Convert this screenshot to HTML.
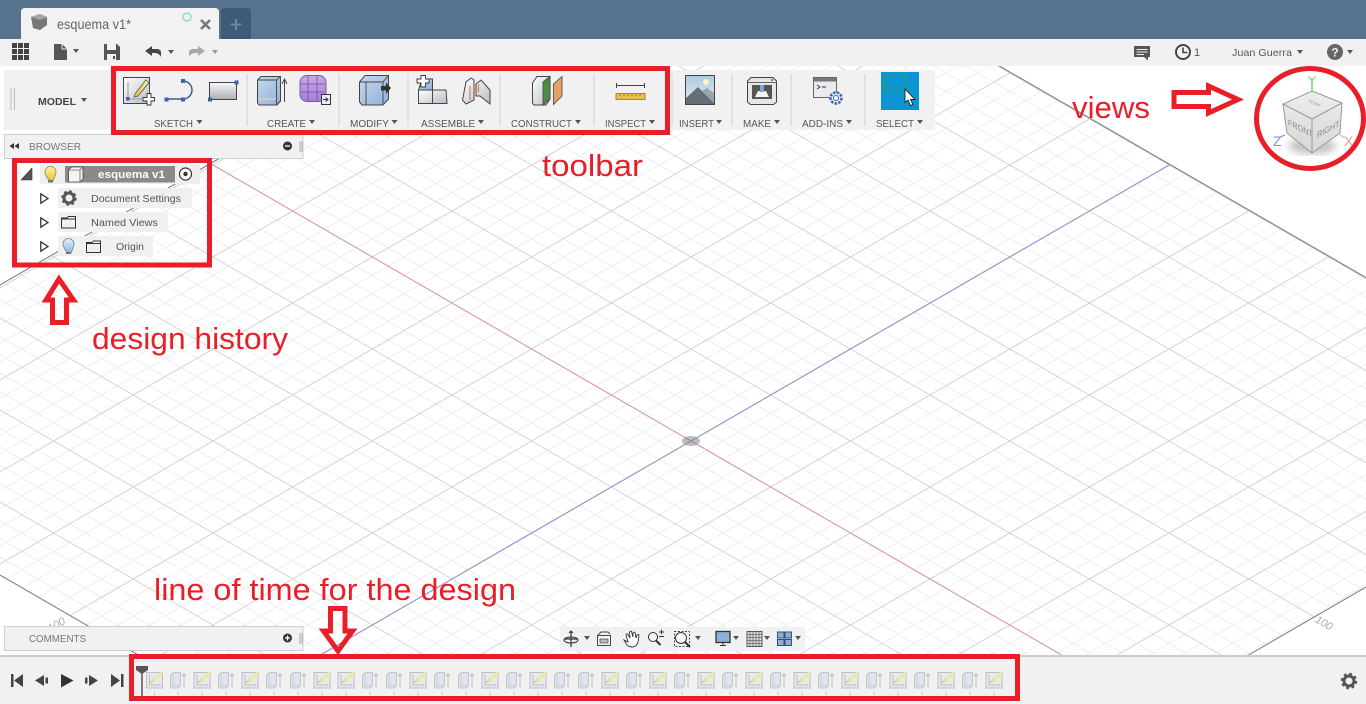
<!DOCTYPE html>
<html><head><meta charset="utf-8"><title>esquema v1</title>
<style>html,body{margin:0;padding:0;background:#fff;overflow:hidden;width:1366px;height:704px}svg{display:block;font-family:"Liberation Sans",sans-serif}</style></head>
<body>
<svg width="1366" height="704" viewBox="0 0 1366 704" xmlns="http://www.w3.org/2000/svg">
<defs>
<pattern id="grid" patternUnits="userSpaceOnUse" width="92" height="92" patternTransform="matrix(.866 .5 .866 -.5 691 441)">
<g stroke="#eeeeee" stroke-width="1.1" fill="none">
<path d="M18.4 0V92M36.8 0V92M55.2 0V92M73.6 0V92M0 18.4H92M0 36.8H92M0 55.2H92M0 73.6H92"/></g>
<g stroke="#d0d0d0" stroke-width="1.1" fill="none"><path d="M0 0V92M92 0V92M0 0H92M0 92H92"/></g>
</pattern>
<linearGradient id="gw" x1="0" y1="0" x2="0" y2="1"><stop offset="0" stop-color="#fafafa"/><stop offset="1" stop-color="#a9aeb6"/></linearGradient>
<linearGradient id="gs" x1="0" y1="0" x2="1" y2="1"><stop offset="0" stop-color="#fff"/><stop offset="1" stop-color="#b9bec6"/></linearGradient>
<linearGradient id="gb" x1="0" y1="0" x2="1" y2="1"><stop offset="0" stop-color="#c6d9ee"/><stop offset="1" stop-color="#8fb0d6"/></linearGradient>
<linearGradient id="gp" x1="0" y1="0" x2="0" y2="1"><stop offset="0" stop-color="#c9a8e8"/><stop offset="1" stop-color="#a47fd4"/></linearGradient>
<linearGradient id="gy" x1="0" y1="0" x2="0" y2="1"><stop offset="0" stop-color="#fdf5a0"/><stop offset="1" stop-color="#e2c433"/></linearGradient>
<linearGradient id="gbu" x1="0" y1="0" x2="0" y2="1"><stop offset="0" stop-color="#e4eefa"/><stop offset="1" stop-color="#8fb4de"/></linearGradient>
<linearGradient id="gsky" x1="0" y1="0" x2="0" y2="1"><stop offset="0" stop-color="#a9cbe0"/><stop offset="1" stop-color="#e6eef2"/></linearGradient>
<linearGradient id="gc" x1="0" y1="0" x2="0" y2="1"><stop offset="0" stop-color="#eeeeee"/><stop offset="1" stop-color="#d6d6d6"/></linearGradient>
<filter id="bl"><feGaussianBlur stdDeviation="4"/></filter>
<g id="S">
<rect x="-8" y="0" width="16" height="15.5" fill="#e6e9ee" stroke="#bdbdbd"/>
<path d="M-5 2V12.5H6" fill="none" stroke="#bcbcbc"/>
<path d="M-3 10L8 0" stroke="#efe7a0" stroke-width="3"/>
<path d="M-4.5 11L-1 7" stroke="#d8c8a8" stroke-width="1"/>
<path d="M0 19V23" stroke="#c8c8c8"/>
</g>
<g id="E">
<path d="M-7.5 3L-5 0H2.5V13L0 15.5H-7.5Z" fill="#dde4ee" stroke="#c4c4c4"/>
<path d="M-5 0V13H-7.5M-5 13H2.5" fill="none" stroke="#d0d0d0"/>
<path d="M6 15V2M4 4L6 1L8 4" fill="none" stroke="#c4c4c4"/>
<path d="M0 19V23" stroke="#c8c8c8"/>
</g>
<path id="car" d="M-3 -2H3L0 2Z" fill="#555"/>
<path id="tr" d="M0.8 0.8L8 5.5L0.8 10.2Z" fill="#fff" stroke="#333" stroke-width="1.3"/>
<path id="fold" d="M0.5 2.5H6L7.5 1H14.5V12.5H0.5Z M0.5 3.5H14.5" fill="none" stroke="#333"/>
</defs>

<rect width="1366" height="704" fill="#fff"/>
<!-- grid -->
<polygon points="494,0 885,0 1366,277.6 1366,587 1164,704 223,704 0,575 0,285" fill="url(#grid)"/>
<path d="M0 285L494 0M885 0L1366 277.600M1164 704L1366 587M0 575L223 704" fill="none" stroke="#777" stroke-width="1"/>
<line x1="210.400" y1="163.500" x2="1146.500" y2="704" stroke="#dd9a9c" stroke-width="1.100"/>
<line x1="1170" y1="164.500" x2="235.500" y2="704" stroke="#9292cf" stroke-width="1.100"/>
<ellipse cx="691" cy="441" rx="9" ry="5" fill="#bdbdbd"/>
<path d="M685 437.500L697 444.500M685 444.500L697 437.500" stroke="#8a7f9d" stroke-width="1"/>
<text x="1315" y="627" font-size="11" font-style="italic" fill="#aaa" transform="rotate(30 1325 623)">100</text>
<text x="47" y="628" font-size="11" font-style="italic" fill="#aaa" transform="rotate(-30 57 624)">100</text>

<!-- title bar -->
<rect width="1366" height="39" fill="#56728f"/>
<path d="M21 39V12Q21 8 25 8H215Q219 8 219 12V39Z" fill="#f2f2f2"/>
<path d="M221 39V12Q221 8 225 8H247Q251 8 251 12V39Z" fill="#3f5a78"/>
<path d="M31 17L40 14L47 17V25L40 30L33 28Z" fill="#777"/><path d="M31 17L40 20L47 17L40 14Z" fill="#a5a5a5"/>
<text x="57" y="29" font-size="14" fill="#666" textLength="74" lengthAdjust="spacingAndGlyphs">esquema v1*</text>
<circle cx="187" cy="17" r="4" fill="none" stroke="#7fd6c4" stroke-width="1.2"/>
<path d="M201 20L210 29M210 20L201 29" stroke="#777" stroke-width="2.6"/>
<path d="M236 19V30M230.500 24.500H241.500" stroke="#6d87a0" stroke-width="2"/>

<!-- menu row -->
<rect y="39" width="1366" height="27" fill="#f1f1f1"/>
<path d="M12 43h5v5h-5zM18 43h5v5h-5zM24 43h5v5h-5zM12 49h5v5h-5zM18 49h5v5h-5zM24 49h5v5h-5zM12 55h5v5h-5zM18 55h5v5h-5zM24 55h5v5h-5z" fill="#444"/>
<path d="M54 44H62L67 49V60H54Z" fill="#555"/><path d="M62 44V49H67" fill="none" stroke="#f1f1f1"/>
<use href="#car" x="76" y="51"/>
<path d="M104 44H117L120 47V60H104Z" fill="#555"/><rect x="107" y="44" width="9" height="6" fill="#f1f1f1"/><rect x="107" y="54" width="9" height="6" fill="#f1f1f1"/><rect x="113" y="56" width="2" height="3" fill="#555"/>
<path d="M145 51L152 46V49H157Q161 49 161 53V57Q159 53 155 53H152V56Z" fill="#444"/>
<use href="#car" x="171" y="52"/>
<path d="M205 51L198 46V49H193Q189 49 189 53V57Q191 53 195 53H198V56Z" fill="#a8a8a8"/>
<path d="M212 50H218L215 54Z" fill="#999"/>
<path d="M1134 46H1150V57H1148V60.500L1144 57H1134Z" fill="#555"/><path d="M1136.500 49.500H1147.500M1136.500 52H1147.500M1136.500 54.500H1144" stroke="#f1f1f1"/>
<circle cx="1183" cy="52" r="7" fill="none" stroke="#444" stroke-width="2"/><path d="M1183 47.500V52.500H1187.500" fill="none" stroke="#444" stroke-width="1.6"/>
<text x="1194" y="56" font-size="11" fill="#555">1</text>
<text x="1232" y="56" font-size="10.500" fill="#555" textLength="60" lengthAdjust="spacingAndGlyphs">Juan Guerra</text>
<use href="#car" x="1300" y="52"/>
<circle cx="1335" cy="52" r="8" fill="#666"/><text x="1335" y="56.500" font-size="12" font-weight="bold" fill="#f1f1f1" text-anchor="middle">?</text>
<use href="#car" x="1350" y="52"/>

<!-- toolbar -->
<rect x="4" y="70" width="931" height="60" fill="#f1f1f1"/>
<path d="M11 88V110M14.500 88V110" stroke="#bdbdbd"/>
<text x="38" y="105" font-size="10.500" font-weight="bold" fill="#444" textLength="38" lengthAdjust="spacingAndGlyphs">MODEL</text>
<use href="#car" x="84" y="100"/>
<path d="M247 74V126M339 74V126M408 74V126M500 74V126M594 74V126M672 74V126M732 74V126M791 74V126M865 74V126" stroke="#dcdcdc" stroke-width="1.500"/>
<g font-size="10.500" fill="#555">
<text x="154" y="127" textLength="39" lengthAdjust="spacingAndGlyphs">SKETCH</text>
<text x="267" y="127" textLength="39" lengthAdjust="spacingAndGlyphs">CREATE</text>
<text x="350" y="127" textLength="39" lengthAdjust="spacingAndGlyphs">MODIFY</text>
<text x="421" y="127" textLength="54" lengthAdjust="spacingAndGlyphs">ASSEMBLE</text>
<text x="511" y="127" textLength="61" lengthAdjust="spacingAndGlyphs">CONSTRUCT</text>
<text x="605" y="127" textLength="41" lengthAdjust="spacingAndGlyphs">INSPECT</text>
<text x="679" y="127" textLength="35" lengthAdjust="spacingAndGlyphs">INSERT</text>
<text x="743" y="127" textLength="28" lengthAdjust="spacingAndGlyphs">MAKE</text>
<text x="802" y="127" textLength="41" lengthAdjust="spacingAndGlyphs">ADD-INS</text>
<text x="876" y="127" textLength="38" lengthAdjust="spacingAndGlyphs">SELECT</text>
</g>
<use href="#car" x="199.500" y="122"/><use href="#car" x="312" y="122"/><use href="#car" x="394.500" y="122"/><use href="#car" x="481" y="122"/><use href="#car" x="578" y="122"/><use href="#car" x="652" y="122"/><use href="#car" x="719" y="122"/><use href="#car" x="777" y="122"/><use href="#car" x="849" y="122"/><use href="#car" x="920" y="122"/>

<!-- sketch -->
<rect x="123.500" y="77.500" width="26" height="26" fill="url(#gs)" stroke="#444"/>
<path d="M128 82V99H145" fill="none" stroke="#9a9a9a"/><rect x="126" y="97" width="3.500" height="3.500" fill="#3c62ad"/>
<path d="M135 94L146 80L149 82.500L138 96L134 97Z" fill="url(#gy)" stroke="#555" stroke-width=".8"/>
<path d="M147 93.500H151V97.500H154.500V101H151V105H147V101H143V97.500H147Z" fill="#fff" stroke="#333" stroke-width=".9"/>
<path d="M166 99H183A9 9 0 0 0 183 81" fill="none" stroke="#3c5a9a" stroke-width="1.500"/>
<rect x="164.500" y="97.500" width="4" height="4" fill="#3c62ad"/><rect x="181" y="97.500" width="4" height="4" fill="#3c62ad"/><rect x="181" y="79" width="4" height="4" fill="#3c62ad"/>
<rect x="209.500" y="82.500" width="27" height="17" fill="url(#gw)" stroke="#444"/>
<rect x="234.500" y="80.500" width="4" height="4" fill="#3c62ad"/><rect x="208" y="97.500" width="4" height="4" fill="#3c62ad"/>
<!-- create -->
<path d="M257.500 80L261 76.500H280.500V101L277 105H259L257.500 103Z" fill="url(#gb)" stroke="#444"/>
<path d="M258 80H276.500V105M276.500 80L280.500 76.500" fill="none" stroke="#444" stroke-width=".9"/><path d="M258 99H276" stroke="#ccc" stroke-width="2"/>
<path d="M284.500 102V80M282 84L284.500 79L287 84" fill="none" stroke="#444"/>
<rect x="300" y="75.500" width="26" height="26" rx="7" fill="url(#gp)" stroke="#7a5aa8"/>
<path d="M301 84H325M301 92H325M308 76V101M317 76V101" stroke="#7c5cb0"/>
<rect x="321.500" y="94.500" width="9" height="10" fill="#eee" stroke="#333"/><path d="M323 99.500H327M325.500 97.500L328 99.500L325.500 101.500" fill="none" stroke="#333"/>
<!-- modify -->
<path d="M359.500 82L365 75.500H388.500V99L383 105H362L359.500 102Z" fill="url(#gb)" stroke="#444"/>
<path d="M366 82H383V105M383 82L388.500 75.500M366 82V105M360 82H366" fill="none" stroke="#444" stroke-width=".9"/>
<path d="M381 86H386V82.500L391 88L386 94V90.500H381Z" fill="#333"/>
<!-- assemble -->
<path d="M418.500 90H432.500V103.500H418.500Z M432.500 90H446L447 103.500H432.500Z" fill="url(#gs)" stroke="#444"/>
<path d="M422 79H432.500V90H418.500Z" fill="url(#gb)" stroke="#444"/>
<path d="M421 75.500H425.500V79H429V83H425.500V87H421V83H417V79H421Z" fill="#fff" stroke="#333" stroke-width=".9"/>
<!-- joint -->
<path d="M462.500 100L466 82L471 78L474 80V100L466 104ZM476 84L481 80L490 90V104L480 96L476 96Z" fill="url(#gs)" stroke="#444"/>
<path d="M470 86V100M478.500 84V92" stroke="#e08a3c" stroke-width="1.300"/>
<!-- construct -->
<path d="M532.500 83L537 76.500H550V99L546 105H534L532.500 103Z" fill="url(#gs)" stroke="#444"/>
<path d="M543 82L550 76.500V99L543 105Z" fill="#4f8a45" stroke="#444" stroke-width=".8"/>
<path d="M553.500 84L562 76.500V96L553.500 104.500Z" fill="#e6a06a" stroke="#444" stroke-width=".8"/>
<!-- inspect -->
<path d="M616.500 83V88M644.500 83V88M616.500 85.500H644.500" stroke="#444" fill="none"/>
<rect x="616" y="93.500" width="29" height="6" fill="#e6c04a" stroke="#a58a3a"/><path d="M620 94V96M624 94V96M628 94V96M632 94V96M636 94V96M640 94V96" stroke="#8a6f2a" stroke-width=".8"/>
<!-- insert -->
<rect x="685.500" y="75.500" width="29" height="29" fill="url(#gsky)" stroke="#444"/>
<circle cx="706" cy="82" r="3" fill="#fdf6c0"/>
<path d="M686 98L698 87L714 103V104H686Z" fill="#666d77"/><path d="M702 91L707 88L714 93V103Z" fill="#98a3ae"/>
<!-- make -->
<path d="M747.500 81L751 77.500H773L776.500 81V102L773.500 104.500H750.500L747.500 102Z" fill="#e6e6e6" stroke="#444"/>
<path d="M748 82.500H776" stroke="#666"/><rect x="752" y="85" width="20" height="14" fill="#555"/>
<path d="M755 97L758 91H766L769 97Z" fill="#f3f3f3"/><rect x="760" y="85" width="4" height="7" fill="#7fa8d8"/>
<rect x="771" y="79" width="2" height="2" fill="#2f9e4f"/>
<!-- add-ins -->
<rect x="813.500" y="77.500" width="23" height="20" fill="#e9ebee" stroke="#666"/><rect x="814" y="78" width="22" height="3.500" fill="#777"/>
<path d="M817 85L820 87L817 89M822 87H826" fill="none" stroke="#333" stroke-width=".9"/>
<circle cx="836" cy="98" r="5.500" fill="#e6eef8" stroke="#3d66a8" stroke-width="2.500" stroke-dasharray="2.500 1.300"/><circle cx="836" cy="98" r="2.500" fill="#fff" stroke="#3d66a8"/>
<!-- select -->
<rect x="881" y="72" width="38" height="38" fill="#0a94d6"/>
<rect x="885" y="75.500" width="21" height="14" fill="none" stroke="#2f9f5c" stroke-width="1.500"/>
<path d="M905 89V102.500L908 100L910.500 105.500L913 104.500L910.500 99.500H915Z" fill="#fff" stroke="#222" stroke-width=".9"/>

<!-- browser -->
<rect x="4.500" y="134.500" width="298.500" height="24" fill="#f1f1f1" stroke="#d0d0d0"/>
<path d="M14 143V149L9.500 146ZM19 143V149L14.500 146Z" fill="#333"/>
<text x="29" y="150" font-size="10.500" fill="#777" textLength="52" lengthAdjust="spacingAndGlyphs">BROWSER</text>
<circle cx="287.500" cy="146" r="4.500" fill="#333"/><path d="M285 146H290" stroke="#fff" stroke-width="1.300"/>
<path d="M300 141V152M302 141V152" stroke="#aaa"/>
<!-- tree -->
<rect x="40" y="165" width="160" height="19" fill="#efefef"/>
<rect x="58" y="188" width="134" height="20" fill="#f0f0f0"/>
<rect x="58" y="212" width="110" height="20" fill="#f0f0f0"/>
<rect x="58" y="236" width="95" height="20" fill="#f0f0f0"/>
<path d="M21 180L32 168V180Z" fill="#555" stroke="#333" stroke-width=".6"/>
<path d="M50 181C47 178 45 175 45 172A5.500 5.500 0 0 1 56 172C56 175 54 178 53 181Z" fill="url(#gy)" stroke="#8a8a5a" stroke-width=".8"/><rect x="48" y="180" width="5" height="2.500" fill="#777"/>
<rect x="65" y="166" width="110" height="16.500" fill="#8a8a8a"/>
<path d="M68.500 170L71.500 167H83V179L80 182H68.500Z" fill="#f4f4f4" stroke="#444" stroke-width=".8"/><path d="M69 170H80V182M80 170L83 167" fill="none" stroke="#666" stroke-width=".8"/>
<text x="98" y="178" font-size="11" font-weight="bold" fill="#fff" textLength="67" lengthAdjust="spacingAndGlyphs">esquema v1</text>
<circle cx="185.500" cy="174" r="6" fill="#fff" stroke="#333" stroke-width="1.200"/><circle cx="185.500" cy="174" r="2.200" fill="#333"/>
<use href="#tr" x="40" y="193"/><use href="#tr" x="40" y="217"/><use href="#tr" x="40" y="241"/>
<circle cx="69" cy="198" r="5" fill="none" stroke="#555" stroke-width="3"/>
<circle cx="69" cy="198" r="6.500" fill="none" stroke="#555" stroke-width="2.500" stroke-dasharray="2.500 2.600"/>
<text x="91" y="202" font-size="10.500" fill="#555" textLength="90" lengthAdjust="spacingAndGlyphs">Document Settings</text>
<use href="#fold" x="61" y="215.500"/>
<text x="91" y="226" font-size="10.500" fill="#555" textLength="67" lengthAdjust="spacingAndGlyphs">Named Views</text>
<path d="M68 253C65 250 63 247 63 244A5.500 5.500 0 0 1 74 244C74 247 72 250 71 253Z" fill="url(#gbu)" stroke="#6a84a8" stroke-width=".8"/><rect x="66" y="252" width="5" height="2" fill="#777"/>
<use href="#fold" x="86" y="240"/>
<text x="116" y="250" font-size="10.500" fill="#555" textLength="28" lengthAdjust="spacingAndGlyphs">Origin</text>

<!-- comments -->
<rect x="4.500" y="626.500" width="298.500" height="24" fill="#f1f1f1" stroke="#d0d0d0"/>
<text x="29" y="642" font-size="10.500" fill="#777" textLength="57" lengthAdjust="spacingAndGlyphs">COMMENTS</text>
<circle cx="287.500" cy="638" r="4.500" fill="#333"/><path d="M285 638H290M287.500 635.500V640.500" stroke="#fff" stroke-width="1.300"/>
<path d="M300 633V644M302 633V644" stroke="#aaa"/>

<!-- view toolbar -->
<rect x="560" y="627" width="245" height="24" fill="#f1f1f1"/>
<path d="M571 631V647M564 639H578" stroke="#333" stroke-width="1.200"/><ellipse cx="571" cy="640" rx="7" ry="3" fill="none" stroke="#333"/><path d="M569 633L571 631L573 633" fill="none" stroke="#333"/>
<use href="#car" x="587" y="638"/>
<rect x="597.500" y="635.500" width="13" height="10" fill="#f6f6f6" stroke="#444"/><rect x="600" y="639" width="8" height="4" fill="#bbb" stroke="#444" stroke-width=".7"/><path d="M598 635L601 632H608L610 634" fill="none" stroke="#444"/>
<path d="M624 640L627 645Q629 647 633 647Q637 646 638 642L639 635Q638 634 637 635L636 638L635 632.500Q634 631.500 633 633L633 637L631.500 631.500Q630.500 630.500 629.500 632L630 638L627.500 634Q626.500 633.500 626 635L628 642Z" fill="#fff" stroke="#333" stroke-width=".9"/>
<circle cx="653" cy="637" r="4.500" fill="#f6f6f6" stroke="#333"/><path d="M656 640.500L660.500 645" stroke="#333" stroke-width="2"/><path d="M659 632H664M661.500 629.500V634.500M659 636.500H664" stroke="#333" stroke-width=".9" fill="none"/>
<rect x="674.500" y="631.500" width="15" height="15" fill="none" stroke="#444" stroke-dasharray="2 1.500"/><circle cx="681" cy="638" r="5.500" fill="#f6f6f6" stroke="#333"/><path d="M685 642L690 647" stroke="#333" stroke-width="2"/>
<use href="#car" x="698" y="638"/>
<rect x="716" y="631.500" width="14" height="11" fill="#8fb0d6" stroke="#333" stroke-width="1.300"/><path d="M720 645.500H726M723 643V645.500" stroke="#333"/>
<use href="#car" x="736" y="638"/>
<rect x="747" y="631.500" width="15" height="15" fill="#ddd" stroke="#555"/><path d="M750 632V646M753 632V646M756 632V646M759 632V646M747 634.500H762M747 637.500H762M747 640.500H762M747 643.500H762" stroke="#666" stroke-width=".8"/>
<use href="#car" x="767" y="638"/>
<rect x="777.500" y="632" width="6.500" height="6" fill="#8fb0d6" stroke="#33507a"/><rect x="785" y="632" width="6.500" height="6" fill="#8fb0d6" stroke="#33507a"/><rect x="777.500" y="639.500" width="6.500" height="6" fill="#8fb0d6" stroke="#33507a"/><rect x="785" y="639.500" width="6.500" height="6" fill="#8fb0d6" stroke="#33507a"/>
<use href="#car" x="798" y="638"/>

<!-- timeline -->
<rect y="655" width="1366" height="49" fill="#f1f1f1"/>
<rect y="655" width="1366" height="2" fill="#cdcdcd"/>
<path d="M11 674H13.500V687H11ZM23 674V687L14 680.500Z" fill="#444"/>
<path d="M44 675V686L35 680.500ZM45.500 677.500H48V683.500H45.500Z" fill="#444"/>
<path d="M61 674V687.500L73.500 680.500Z" fill="#333"/>
<path d="M89 675V686L98 680.500ZM85 677.500H87.500V683.500H85Z" fill="#444"/>
<path d="M111 674V687L120 680.500ZM121 674H123.500V687H121Z" fill="#444"/>
<g transform="translate(0 672.500)">
<use href="#S" x="154.500"/><use href="#E" x="178"/><use href="#S" x="202"/><use href="#E" x="226"/><use href="#S" x="250"/><use href="#E" x="274"/><use href="#E" x="298"/><use href="#S" x="322"/><use href="#S" x="346"/><use href="#E" x="370"/><use href="#E" x="394"/><use href="#S" x="418"/><use href="#E" x="442"/><use href="#E" x="466"/><use href="#S" x="490"/><use href="#E" x="514"/><use href="#S" x="538"/><use href="#E" x="562"/><use href="#E" x="586"/><use href="#S" x="610"/><use href="#E" x="634"/><use href="#S" x="658"/><use href="#E" x="682"/><use href="#S" x="706"/><use href="#E" x="730"/><use href="#S" x="754"/><use href="#E" x="778"/><use href="#S" x="802"/><use href="#E" x="826"/><use href="#S" x="850"/><use href="#E" x="874"/><use href="#S" x="898"/><use href="#E" x="922"/><use href="#S" x="946"/><use href="#E" x="970"/><use href="#S" x="994"/>
</g>
<path d="M136 666H148V670L142 674L136 670Z" fill="#555"/><path d="M142 672V697" stroke="#555" stroke-width="1.500"/>
<circle cx="1349" cy="681" r="5" fill="none" stroke="#555" stroke-width="3"/>
<circle cx="1349" cy="681" r="7" fill="none" stroke="#555" stroke-width="2.500" stroke-dasharray="2.700 2.800"/>

<!-- view cube -->
<ellipse cx="1312" cy="146" rx="24" ry="8" fill="#8f8f8f" opacity=".55" filter="url(#bl)"/>
<path d="M1312 91L1342 103L1340 133L1312 153L1287 133L1283 104Z" fill="url(#gc)" stroke="#999"/>
<path d="M1283 104L1312 119L1342 103M1312 119V153" fill="none" stroke="#999"/>
<path d="M1312 78V91" stroke="#90e090" stroke-width="2"/>
<text x="1312" y="86" font-size="15" fill="#90e090" text-anchor="middle">Y</text>
<path d="M1285 135L1280 137" stroke="#8888ee"/><path d="M1338 134L1345 138" stroke="#f0a0a0"/>
<text x="1273" y="146" font-size="14" fill="#8a8aee">Z</text>
<text x="1344" y="146" font-size="14" fill="#f09a9a">X</text>
<text x="0" y="0" font-size="7" fill="#999" transform="matrix(.85 .4 -.7 .35 1306 101)">TOP</text>
<text x="0" y="0" font-size="8.500" fill="#888" transform="matrix(.85 .42 0 1 1288 125)">FRONT</text>
<text x="0" y="0" font-size="8.500" fill="#888" transform="matrix(.85 -.45 0 1 1317 138)">RIGHT</text>

<!-- annotations -->
<g fill="none" stroke="#e81f28" stroke-width="5">
<rect x="113.500" y="68.500" width="554" height="64"/>
<rect x="14.500" y="160.500" width="195" height="104.500"/>
<rect x="131.500" y="656.500" width="886" height="42"/>
<ellipse cx="1310" cy="118.500" rx="53.500" ry="50"/>
<path d="M59 279L73.500 300H66.500V322.500H52.500V300H46Z"/>
<path d="M330.500 608.500H345V631H352.500L338 651L323.500 631H330.500Z"/>
<path d="M1174 92.500H1208.500V86L1238 99.500L1208.500 113V106.500H1174Z"/>
</g>
<g font-size="31" fill="#e81f28">
<text x="542" y="176" textLength="101" lengthAdjust="spacingAndGlyphs">toolbar</text>
<text x="1072" y="118" textLength="78" lengthAdjust="spacingAndGlyphs">views</text>
<text x="92" y="349" textLength="196" lengthAdjust="spacingAndGlyphs">design history</text>
<text x="154" y="600" textLength="362" lengthAdjust="spacingAndGlyphs">line of time for the design</text>
</g>
</svg>
</body></html>
